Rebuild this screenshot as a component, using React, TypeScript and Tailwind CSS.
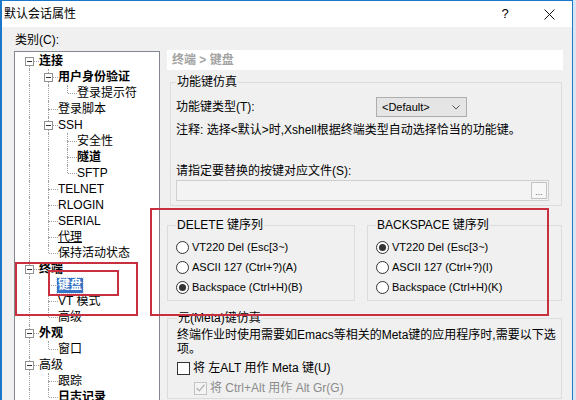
import React from 'react';

type TreeNode = {
  label: string;
  bold?: boolean;
  link?: boolean;
  selected?: boolean;
  children?: TreeNode[];
};

type Row = {
  node: TreeNode;
  level: number;
  ancestors: boolean[];
  up: boolean;
  down: boolean;
};

const tree: TreeNode[] = [
  {
    label: '连接',
    bold: true,
    children: [
      { label: '用户身份验证', bold: true, children: [{ label: '登录提示符' }] },
      { label: '登录脚本' },
      {
        label: 'SSH',
        children: [{ label: '安全性' }, { label: '隧道', bold: true }, { label: 'SFTP' }],
      },
      { label: 'TELNET' },
      { label: 'RLOGIN' },
      { label: 'SERIAL' },
      { label: '代理', link: true },
      { label: '保持活动状态' },
    ],
  },
  {
    label: '终端',
    bold: true,
    children: [{ label: '键盘', bold: true, selected: true }, { label: 'VT 模式' }, { label: '高级' }],
  },
  { label: '外观', bold: true, children: [{ label: '窗口' }] },
  { label: '高级', children: [{ label: '跟踪' }, { label: '日志记录', bold: true }] },
  { label: '文件传输', children: [{ label: 'X/YMODEM' }, { label: 'ZMODEM' }] },
];

const flatten = (nodes: TreeNode[], level: number, ancestors: boolean[], out: Row[]) => {
  nodes.forEach((node, i) => {
    const hasNext = i < nodes.length - 1;
    out.push({ node, level, ancestors, up: !(level === 0 && i === 0), down: hasNext });
    if (node.children) flatten(node.children, level + 1, [...ancestors, hasNext], out);
  });
  return out;
};

const rows = flatten(tree, 0, [], []);

const dots = 'absolute border-dotted border-[#a0a0a0]';

const TreeRow = ({ row }: { row: Row }) => {
  const { node } = row;
  return (
    <div className="flex h-[16px] items-center">
      {row.ancestors.map((cont, i) => (
        <div key={i} className="relative h-[16px] w-[19px] shrink-0">
          {cont && <div className={`${dots} top-0 left-[9px] h-[16px] border-l`} />}
        </div>
      ))}
      <div className="relative h-[16px] w-[19px] shrink-0">
        {row.up && <div className={`${dots} top-0 left-[9px] h-[8px] border-l`} />}
        {row.down && <div className={`${dots} top-[8px] left-[9px] h-[8px] border-l`} />}
        <div className={`${dots} top-[8px] left-[10px] w-[9px] border-t`} />
        {node.children && (
          <div className="absolute top-[4px] left-[5px] flex h-[9px] w-[9px] items-center justify-center border border-[#919191] bg-white">
            <div className="h-px w-[5px] bg-[#333]" />
          </div>
        )}
      </div>
      <span
        className={
          node.selected
            ? 'ml-[-1px] bg-[#3874c6] px-[1px] leading-[15px] font-bold whitespace-nowrap text-white outline-1 outline-dotted outline-[#cfd9e8]'
            : `whitespace-nowrap ${node.bold ? 'font-bold text-black' : 'text-black'} ${
                node.link ? 'text-[#0a5fb4] underline' : ''
              }`
        }
      >
        {node.label}
      </span>
    </div>
  );
};

const Radio = ({ checked, label }: { checked?: boolean; label: string }) => (
  <div className="flex h-[20px] items-center">
    <span className="flex h-[13px] w-[13px] items-center justify-center rounded-full border border-[#333] bg-white">
      {checked && <span className="h-[7px] w-[7px] rounded-full bg-[#333]" />}
    </span>
    <span className="ml-[3px] text-[11px] whitespace-nowrap">{label}</span>
  </div>
);

export default function App() {
  return (
    <div className="relative h-[400px] w-[576px] overflow-hidden bg-[#d9e6f1] font-['Liberation_Sans','Noto_Sans_CJK_SC',sans-serif] text-[12px] leading-[16px] text-black">
      <div className="flex h-[400px] w-[573px] flex-col border-t border-r border-l-2 border-[#1b78c8] bg-[#f0f0f0]">
        {/* title bar */}
        <div className="flex h-[26px] shrink-0 items-center bg-white pl-[2px]">
          <span>默认会话属性</span>
          <span className="ml-auto w-[44px] text-center text-[13px]">?</span>
          <span className="flex w-[45px] items-center justify-center">
            <svg width="11" height="11" viewBox="0 0 11 11">
              <path d="M0.5 0.5 L10.5 10.5 M10.5 0.5 L0.5 10.5" stroke="#111" strokeWidth="1" />
            </svg>
          </span>
        </div>

        <div className="flex flex-1 flex-col pt-[5px] pl-[12px]">
          <div className="pl-[1px]">类别(C):</div>
          <div className="mt-[2px] flex items-start">
            {/* category tree */}
            <div className="mt-[1px] h-[360px] w-[146px] shrink-0 overflow-hidden border border-[#828790] bg-white pt-[1px] pl-[5px]">
              {rows.map((r, i) => (
                <TreeRow key={i} row={r} />
              ))}
            </div>

            {/* right panel */}
            <div className="ml-[7px] flex w-[396px] flex-col">
              <div className="h-[20px] bg-white pt-[2px] pl-[5px] font-bold text-[#a3a3a3]">终端 &gt; 键盘</div>

              <fieldset className="mt-[4px] mr-[1px] ml-[3px] border border-[#dcdcdc] pr-[12px] pb-[4px] pl-[5px]">
                <legend className="px-[1px]">功能键仿真</legend>
                <div className="mt-[7px] flex h-[20px] items-center">
                  <span className="w-[200px]">功能键类型(T):</span>
                  <div className="flex h-[20px] w-[91px] items-center border border-[#adadad] bg-[#e5e5e5] pr-[6px] pl-[5px]">
                    <span className="text-[11px]">&lt;Default&gt;</span>
                    <svg className="ml-auto" width="8" height="5" viewBox="0 0 8 5">
                      <path d="M0.5 0.5 L4 4 L7.5 0.5" fill="none" stroke="#555" strokeWidth="1" />
                    </svg>
                  </div>
                </div>
                <div className="mt-[5px] whitespace-nowrap">注释: 选择&lt;默认&gt;时,Xshell根据终端类型自动选择恰当的功能键。</div>
                <div className="mt-[25px]">请指定要替换的按键对应文件(S):</div>
                <div className="mt-[1px] flex h-[21px] w-[373px] items-center justify-end border border-[#cfcfcf] bg-[#f3f3f3] pr-[1px]">
                  <div className="flex h-[17px] w-[16px] items-end justify-center border border-[#c2c2c2] bg-[#f7f7f7] pb-[1px] text-[9px] leading-[9px] text-[#666]">
                    ...
                  </div>
                </div>
              </fieldset>

              <div className="mt-[11px] flex gap-[12px]">
                <fieldset className="w-[188px] border border-[#dcdcdc] pb-[3px] pl-[8px]">
                  <legend className="px-[1px]">DELETE 键序列</legend>
                  <div className="mt-[4px]">
                    <Radio label="VT220 Del (Esc[3~)" />
                    <Radio label="ASCII 127 (Ctrl+?)(A)" />
                    <Radio checked label="Backspace (Ctrl+H)(B)" />
                  </div>
                </fieldset>
                <fieldset className="w-[195px] border border-[#dcdcdc] pb-[3px] pl-[8px]">
                  <legend className="px-[1px]">BACKSPACE 键序列</legend>
                  <div className="mt-[4px]">
                    <Radio checked label="VT220 Del (Esc[3~)" />
                    <Radio label="ASCII 127 (Ctrl+?)(I)" />
                    <Radio label="Backspace (Ctrl+H)(K)" />
                  </div>
                </fieldset>
              </div>

              <fieldset className="mt-[9px] mr-[1px] border border-[#dcdcdc] pl-[9px]">
                <legend className="px-[1px]">元(Meta)键仿真</legend>
                <div className="mt-[2px] leading-[14px]">
                  终端作业时使用需要如Emacs等相关的Meta键的应用程序时,需要以下选
                  <br />
                  项。
                </div>
                <div className="mt-[2px] flex h-[20px] items-center">
                  <span className="h-[13px] w-[13px] border border-[#333] bg-white" />
                  <span className="ml-[3px]">将 左ALT 用作 Meta 键(U)</span>
                </div>
                <div className="flex h-[20px] items-center pl-[17px] text-[#8c8c8c]">
                  <span className="flex h-[13px] w-[13px] items-center justify-center border border-[#c4c4c4] bg-[#f4f4f4]">
                    <svg width="9" height="8" viewBox="0 0 9 8">
                      <path d="M0.5 4 L3.3 6.8 L8.5 0.8" fill="none" stroke="#b5b5b5" strokeWidth="1.3" />
                    </svg>
                  </span>
                  <span className="ml-[3px]">将 Ctrl+Alt 用作 Alt Gr(G)</span>
                </div>
              </fieldset>
            </div>
          </div>
        </div>
      </div>

      {/* red annotation boxes */}
      <div className="absolute top-[208px] left-[150px] h-[108px] w-[399px] border-2 border-[#c9303f]" />
      <div className="absolute top-[262px] left-[15px] h-[54px] w-[123px] border-2 border-[#c9303f]" />
      <div className="absolute top-[270px] left-[48px] h-[26px] w-[71px] border-2 border-[#c9303f]" />
    </div>
  );
}
